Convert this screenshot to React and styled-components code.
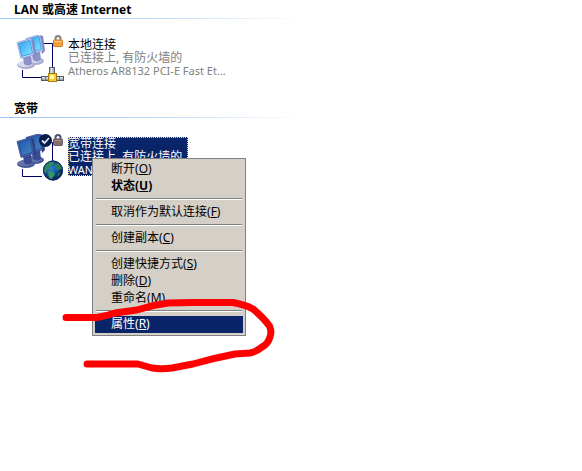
import React from 'react';
import styled, { createGlobalStyle, css } from 'styled-components';

const Global = createGlobalStyle`
  * { box-sizing: border-box; }
  body { margin: 0; background: #fff; color: #000; font: 11px/13px "Noto Sans", "Noto Sans CJK SC", sans-serif; }
`;

const Page = styled.main`
  position: relative;
  min-height: 100vh;
  overflow: hidden;
`;

const Group = styled.section`
  display: flex;
  flex-direction: column;
  min-height: 99px;
`;

const GroupTitle = styled.h2`
  margin: 0;
  width: 100%;
  max-width: 300px;
  height: 19px;
  padding: 3px 14px 0;
  border-bottom: 1px solid;
  border-image: linear-gradient(90deg, #9cc5f3, #b9d8f7 50%, #fff) 1;
  font-size: 12px;
  line-height: 13px;
  white-space: nowrap;
`;

const Connection = styled.article`
  display: flex;
  align-items: flex-start;
  gap: 4px;
  padding: 16px 16px 0;
`;

const IconArt = styled.svg`
  flex: none;
  width: 48px;
  height: 48px;
`;

const Label = styled.div`
  display: flex;
  flex-direction: column;
  margin-top: 3px;
  white-space: nowrap;
  ${p => p.$selected && css`
    min-width: 120px;
    background: #0a246a;
    outline: 1px dotted #f5db95;
    outline-offset: -1px;
  `}
`;

const Line = styled.span`
  height: 13px;
  font-size: ${p => (p.$latin ? 11 : 12)}px;
  color: ${p => p.$color};
`;

const Menu = styled.div`
  position: absolute;
  left: 92px;
  top: 158px;
  width: 154px;
  padding: 2px;
  border: 1px solid #808080;
  background: #d4d0c8;
`;

const MenuItem = styled.button`
  display: flex;
  align-items: flex-start;
  width: 100%;
  height: 17px;
  padding: 0 16px;
  border: 0;
  background: ${p => (p.$active ? '#0a246a' : 'transparent')};
  color: ${p => (p.$active ? '#fff' : '#000')};
  font: ${p => (p.$bold ? 700 : 400)} 12px/15px "Noto Sans", "Noto Sans CJK SC", sans-serif;
  text-align: left;
  white-space: nowrap;
`;

const Separator = styled.hr`
  height: 2px;
  margin: 3px 1px 4px;
  border: 0;
  border-top: 1px solid #808080;
  border-bottom: 1px solid #fff;
`;

const Scribble = styled.svg`
  position: absolute;
  left: 60px;
  top: 296px;
  width: 220px;
  height: 80px;
  pointer-events: none;
`;

function Monitor({ dark }) {
  return (
    <>
      <ellipse cx="10" cy="30" rx="9" ry="4" fill={dark ? '#48589a' : '#a9aed6'} />
      <ellipse cx="9" cy="29" rx="7.500" ry="3" fill={dark ? '#6775ad' : '#d9dbee'} />
      <path d="M7 22 L15 20 L16 29 Q12 32 8 29 Z" fill={dark ? '#384a92' : '#8c92c6'} />
      <path d="M14 4 L18 5 L20 20 L17 23 Z" fill={dark ? '#2c3f88' : '#7d86c0'} />
      <path d="M1 7.500 L15 3.500 L18 19.500 L5 23.500 Z" fill={dark ? '#5a6cad' : '#dfe3f6'} stroke={dark ? '#33478f' : '#8d9bd2'} strokeWidth="0.800" />
      <path d="M2.500 8.500 L14 5.200 L16.500 18.300 L5.800 21.500 Z" fill={dark ? 'url(#screenDark)' : 'url(#screen)'} stroke={dark ? '#1b4a9c' : '#2d8de0'} strokeWidth="0.800" />
    </>
  );
}

function Lock({ dark }) {
  return (
    <>
      <path d="M39.500 6 V3.500 Q39.500 1 42 1 Q44.500 1 44.500 3.500 V6" fill="none" stroke={dark ? '#4d5470' : '#85827f'} strokeWidth="2" />
      <rect x="37.500" y="5" width="9" height="6.500" rx="0.800" fill={dark ? '#86706a' : '#f5a03c'} stroke={dark ? '#66566a' : '#cf7c22'} />
      <path d="M38.500 6.500 H45.500" stroke={dark ? '#a68b7c' : '#ffd08a'} />
    </>
  );
}

function Plug() {
  return (
    <>
      <rect x="33.500" y="32.500" width="5" height="7" fill="#a9adb2" stroke="#5a5e66" />
      <path d="M35.500 33 V39" stroke="#eceff1" strokeWidth="1.500" />
      <rect x="25.500" y="41.500" width="22" height="4" fill="#a5a8ad" stroke="#555860" />
      <path d="M26 42.800 H47" stroke="#edf0f2" strokeWidth="1.200" />
      <path d="M29.500 42 V45 M43.500 42 V45" stroke="#777b82" />
      <rect x="32.500" y="38.500" width="8" height="8" fill="#f5cd3c" stroke="#a67d10" />
      <rect x="34" y="40" width="4" height="4" fill="#fff3a3" />
    </>
  );
}

function Globe() {
  return (
    <>
      <circle cx="37" cy="36.500" r="10" fill="url(#ocean)" />
      <path d="M29 33 Q30 29 34 28 L38 28 L37 31 L34 32 L34 35 L31 36 L30 39 L28 37 Z" fill="#2f8a52" />
      <path d="M39 30 L42 29 Q46 32 46 36 L44 35 L42 37 L39 34 Z" fill="#267d55" />
      <path d="M32 38 L36 37 L39 40 L37 43 L36 45 L33 44 Z" fill="#38985a" />
      <path d="M42 39 L45 38 L43 42 L41 43 Z" fill="#1e6c54" />
      <circle cx="37" cy="36.500" r="9.600" fill="none" stroke="#0c2867" strokeWidth="0.900" />
    </>
  );
}

function ConnectionIcon({ dark }) {
  return (
    <IconArt viewBox="0 0 48 48" aria-hidden="true">
      <defs>
        <linearGradient id="screen" x2="1" y2="1"><stop stopColor="#319bf2" /><stop offset="1" stopColor="#83ebff" /></linearGradient>
        <linearGradient id="screenDark" x2="1" y2="1"><stop stopColor="#2056ad" /><stop offset="1" stopColor="#4685bd" /></linearGradient>
        <radialGradient id="ocean" cx="0.400" cy="0.400"><stop stopColor="#2f83d5" /><stop offset="0.600" stopColor="#1454a8" /><stop offset="1" stopColor="#092661" /></radialGradient>
      </defs>
      <path d="M27 8.500H36.500V33 M6.500 35V42.500H26" fill="none" stroke="#000060" />
      <g transform="translate(9 -4)"><Monitor dark={dark} /></g>
      <Monitor dark={dark} />
      <Lock dark={dark} />
      {dark ? (
        <>
          <Globe />
          <circle cx="29.500" cy="6.500" r="6.500" fill="#071b4b" />
          <path d="M26 6.500 L28.500 9 L33 4" fill="none" stroke="#dce6ff" strokeWidth="1.800" />
        </>
      ) : <Plug />}
    </IconArt>
  );
}

const commands = [
  ['断开', 'O'], ['状态', 'U', 'bold'], null,
  ['取消作为默认连接', 'F'], null,
  ['创建副本', 'C'], null,
  ['创建快捷方式', 'S'], ['删除', 'D'], ['重命名', 'M'], null,
  ['属性', 'R', 'active'],
];

export default function App() {
  return (
    <Page>
      <Global />
      <Group>
        <GroupTitle>LAN 或高速 Internet</GroupTitle>
        <Connection>
          <ConnectionIcon />
          <Label>
            <Line $color="#000">本地连接</Line>
            <Line $color="#808080">已连接上, 有防火墙的</Line>
            <Line $latin $color="#808080">Atheros AR8132 PCI-E Fast Et...</Line>
          </Label>
        </Connection>
      </Group>
      <Group>
        <GroupTitle>宽带</GroupTitle>
        <Connection>
          <ConnectionIcon dark />
          <Label $selected>
            <Line $color="#fff">宽带连接</Line>
            <Line $color="#fff">已连接上, 有防火墙的</Line>
            <Line $latin $color="#fff">WAN</Line>
          </Label>
        </Connection>
      </Group>
      <Menu role="menu">
        {commands.map((c, i) => c ? (
          <MenuItem key={i} role="menuitem" $bold={c[2] === 'bold'} $active={c[2] === 'active'}>
            <span>{c[0]}(<u>{c[1]}</u>)</span>
          </MenuItem>
        ) : <Separator key={i} />)}
      </Menu>
      <Scribble viewBox="60 296 220 80" aria-hidden="true">
        <path d="M66 317.500 H97 Q106 316 115 313 L137 310 Q152 305 168 303 L193 302.500 H233 Q246 305 253 309 Q263 317 269.500 326 Q272 332 270 337 Q268 344 262 347 Q256 352 250 353 L235 354 Q214 358 193 364 L172 368 Q161 369.500 152 368 L138 364 H87" fill="none" stroke="#f00" strokeWidth="7" strokeLinecap="round" strokeLinejoin="round" />
      </Scribble>
    </Page>
  );
}
